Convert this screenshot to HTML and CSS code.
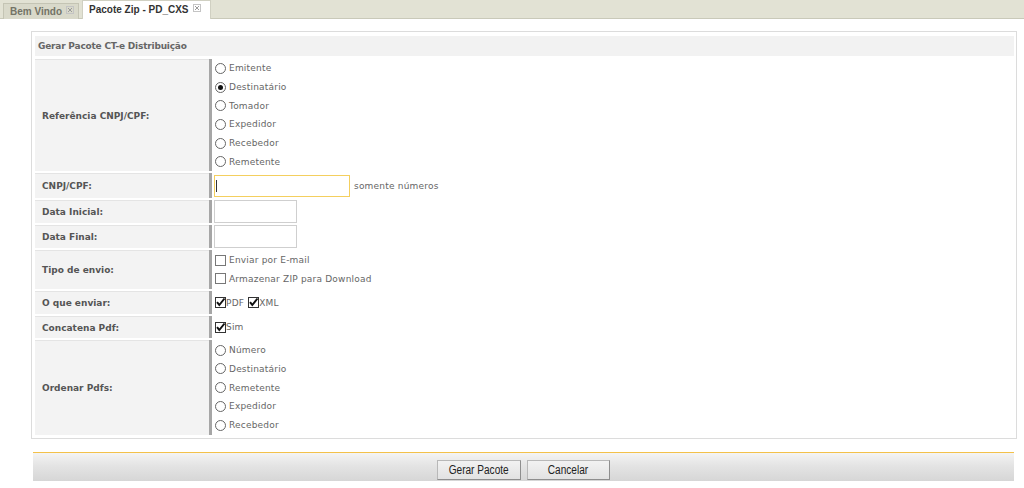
FILE: index.html
```html
<!DOCTYPE html>
<html lang="pt">
<head>
<meta charset="utf-8">
<title>Pacote Zip - PD_CXS</title>
<link rel="stylesheet" href="styles.css">
</head>
<body>
<div class="tabbar">
  <div class="tab">Bem Vindo <svg class="tx" width="8" height="8" viewBox="0 0 8 8"><rect x="0.5" y="0.5" width="7" height="7" fill="none" stroke="#c4c4c4"/><path d="M2 2L6 6M6 2L2 6" stroke="#9a9a9a" stroke-width="1"/></svg></div>
  <div class="tab active">Pacote Zip - PD_CXS <svg class="tx" width="8" height="8" viewBox="0 0 8 8"><rect x="0.5" y="0.5" width="7" height="7" fill="none" stroke="#c4c4c4"/><path d="M2 2L6 6M6 2L2 6" stroke="#9a9a9a" stroke-width="1"/></svg></div>
</div>

<div class="panel">
  <div class="ptitle">Gerar Pacote CT-e Distribuição</div>
  <table class="form">
    <tr class="r-ref">
      <td class="lbl">Referência CNPJ/CPF:</td>
      <td class="val">
        <div class="opt"><span class="radio"></span>Emitente</div>
        <div class="opt"><span class="radio on"></span>Destinatário</div>
        <div class="opt"><span class="radio"></span>Tomador</div>
        <div class="opt"><span class="radio"></span>Expedidor</div>
        <div class="opt"><span class="radio"></span>Recebedor</div>
        <div class="opt"><span class="radio"></span>Remetente</div>
      </td>
    </tr>
    <tr class="r-cnpj">
      <td class="lbl">CNPJ/CPF:</td>
      <td class="val"><div class="line"><span class="inwrap"><input class="inp focus" type="text"><span class="caret"></span></span><span class="hint">somente números</span></div></td>
    </tr>
    <tr class="r-date">
      <td class="lbl">Data Inicial:</td>
      <td class="val"><input class="inp date" type="text"></td>
    </tr>
    <tr class="r-date">
      <td class="lbl">Data Final:</td>
      <td class="val"><input class="inp date" type="text"></td>
    </tr>
    <tr class="r-tipo">
      <td class="lbl">Tipo de envio:</td>
      <td class="val">
        <div class="opt"><span class="check"></span>Enviar por E-mail</div>
        <div class="opt"><span class="check"></span>Armazenar ZIP para Download</div>
      </td>
    </tr>
    <tr class="r-oque">
      <td class="lbl">O que enviar:</td>
      <td class="val">
        <div class="opt inline"><span class="check on"><svg width="11" height="11" viewBox="0 0 11 11"><path d="M2 5.2L4.3 8L9.5 1.5" fill="none" stroke="#111" stroke-width="2"/></svg></span><span class="tight">PDF</span><span class="check on sp"><svg width="11" height="11" viewBox="0 0 11 11"><path d="M2 5.2L4.3 8L9.5 1.5" fill="none" stroke="#111" stroke-width="2"/></svg></span><span class="tight">XML</span></div>
      </td>
    </tr>
    <tr class="r-conc">
      <td class="lbl">Concatena Pdf:</td>
      <td class="val">
        <div class="opt inline"><span class="check on"><svg width="11" height="11" viewBox="0 0 11 11"><path d="M2 5.2L4.3 8L9.5 1.5" fill="none" stroke="#111" stroke-width="2"/></svg></span><span class="tight">Sim</span></div>
      </td>
    </tr>
    <tr class="r-ord">
      <td class="lbl">Ordenar Pdfs:</td>
      <td class="val">
        <div class="opt"><span class="radio"></span>Número</div>
        <div class="opt"><span class="radio"></span>Destinatário</div>
        <div class="opt"><span class="radio"></span>Remetente</div>
        <div class="opt"><span class="radio"></span>Expedidor</div>
        <div class="opt"><span class="radio"></span>Recebedor</div>
      </td>
    </tr>
  </table>
</div>

<div class="footer">
  <button class="btn"><span class="bt">Gerar Pacote</span></button>
  <button class="btn"><span class="bt">Cancelar</span></button>
</div>
</body>
</html>
```

FILE: styles.css
```css
html, body {
  margin: 0;
  padding: 0;
  background: #fff;
}
body {
  width: 1024px;
  height: 488px;
  overflow: hidden;
  font-family: "DejaVu Sans", Verdana, sans-serif;
}

/* tabs */
.tabbar {
  height: 18px;
  background: #e2e2d4;
  border-bottom: 1px solid #c9c9b9;
  display: flex;
  align-items: flex-end;
  padding-left: 3px;
  gap: 3px;
}
.tab {
  height: 16px;
  box-sizing: border-box;
  padding: 0 4px 0 6px;
  display: flex;
  align-items: center;
  gap: 4px;
  font-family: "Liberation Sans", Arial, sans-serif;
  font-weight: bold;
  font-size: 10px;
  color: #737366;
  background: #d9d9ca;
  border: 1px solid #c4c4b4;
  border-bottom: none;
  margin-bottom: -1px;
}
.tab.active {
  height: 19px;
  background: #fff;
  color: #333;
  border-color: #d0d0c2;
  padding: 0 9px 1px 6px;
}
.tx { display: block; margin-top: -4px; }

/* panel */
.panel {
  margin: 12px 0 0 31px;
  width: 986px;
  box-sizing: border-box;
  border: 1px solid #dcdcdc;
  padding: 4px 2px 1px 3px;
}
.ptitle {
  height: 20px;
  line-height: 20px;
  background: #f2f2f2;
  padding-left: 3px;
  font-size: 9px;
  font-weight: bold;
  color: #666;
  letter-spacing: -0.2px;
}
.form {
  width: 100%;
  border-collapse: separate;
  border-spacing: 0 2px;
  font-size: 9px;
  margin-top: 1px;
}
.form td { padding: 0; }
.lbl {
  width: 167px;
  padding-left: 7px !important;
  background: #f3f3f3;
  border-top: 1px solid #e4e4e4;
  font-weight: bold;
  color: #555;
  vertical-align: middle;
}
.val {
  border-left: 3px solid #a6a6a6;
  padding-left: 2px !important;
  color: #666;
  vertical-align: middle;
}
.r-ref td { height: 111px; }
.r-cnpj td { height: 24px; }
.r-date td { height: 22px; }
.r-tipo td { height: 38px; }
.r-oque td { height: 22px; }
.r-conc td { height: 21px; }
.r-ord td { height: 94px; }

.opt {
  height: 18.7px;
  display: flex;
  align-items: center;
  letter-spacing: 0.2px;
}
.opt.inline { height: auto; }
.radio {
  width: 11px;
  height: 11px;
  box-sizing: border-box;
  border: 1px solid #666;
  border-radius: 50%;
  margin: 0 3px 0 1px;
  background: #fff;
  position: relative;
}
.radio.on::after {
  content: "";
  position: absolute;
  left: 2px;
  top: 2px;
  width: 5px;
  height: 5px;
  border-radius: 50%;
  background: #111;
}
.check {
  width: 11px;
  height: 11px;
  box-sizing: border-box;
  border: 1px solid #777;
  margin: 0 3px 0 1px;
  background: #fff;
  display: flex;
}
.check.on {
  border-color: #333;
  margin-right: 0;
}
.check svg { display: block; margin: -1px; }
.check.sp { margin-left: 4px; }
.tight { margin-left: 0; }

.line { display: flex; align-items: center; }
.inwrap { position: relative; display: block; }
.inp {
  display: block;
  box-sizing: border-box;
  height: 22px;
  margin: 0;
  padding: 0;
  border: 1px solid #cfcfcf;
  background: #fff;
  outline: none;
}
.inp.focus {
  width: 136px;
  border-color: #f4cf5e;
}
.caret {
  position: absolute;
  left: 2px;
  top: 5px;
  width: 1px;
  height: 12px;
  background: #333;
}
.inp.date { width: 83px; height: 23px; }
.hint { margin-left: 4px; color: #666; letter-spacing: 0.2px; }

/* footer */
.footer {
  margin: 13px 0 0 33px;
  width: 981px;
  height: 29px;
  box-sizing: border-box;
  border-top: 1px solid #f3c14a;
  background: linear-gradient(to bottom, #f4f4f4 0%, #e4e4e4 45%, #d6d6d6 100%);
  display: flex;
  justify-content: center;
  align-items: flex-end;
  gap: 6px;
  padding-bottom: 1px;
}
.btn {
  height: 20px;
  width: 84px;
  margin: 0;
  padding: 0;
  box-sizing: border-box;
  border: 1px solid #8e8e8e;
  border-top-color: #b8b8b8;
  border-left-color: #b8b8b8;
  background: linear-gradient(to bottom, #f2f2f2, #e2e2e2);
  font-family: "Liberation Sans", Arial, sans-serif;
  font-size: 12px;
  color: #222;
  overflow: hidden;
}
.bt {
  display: inline-block;
  transform: scaleX(0.84);
  white-space: nowrap;
}
.btn + .btn { width: 83px; }
```
